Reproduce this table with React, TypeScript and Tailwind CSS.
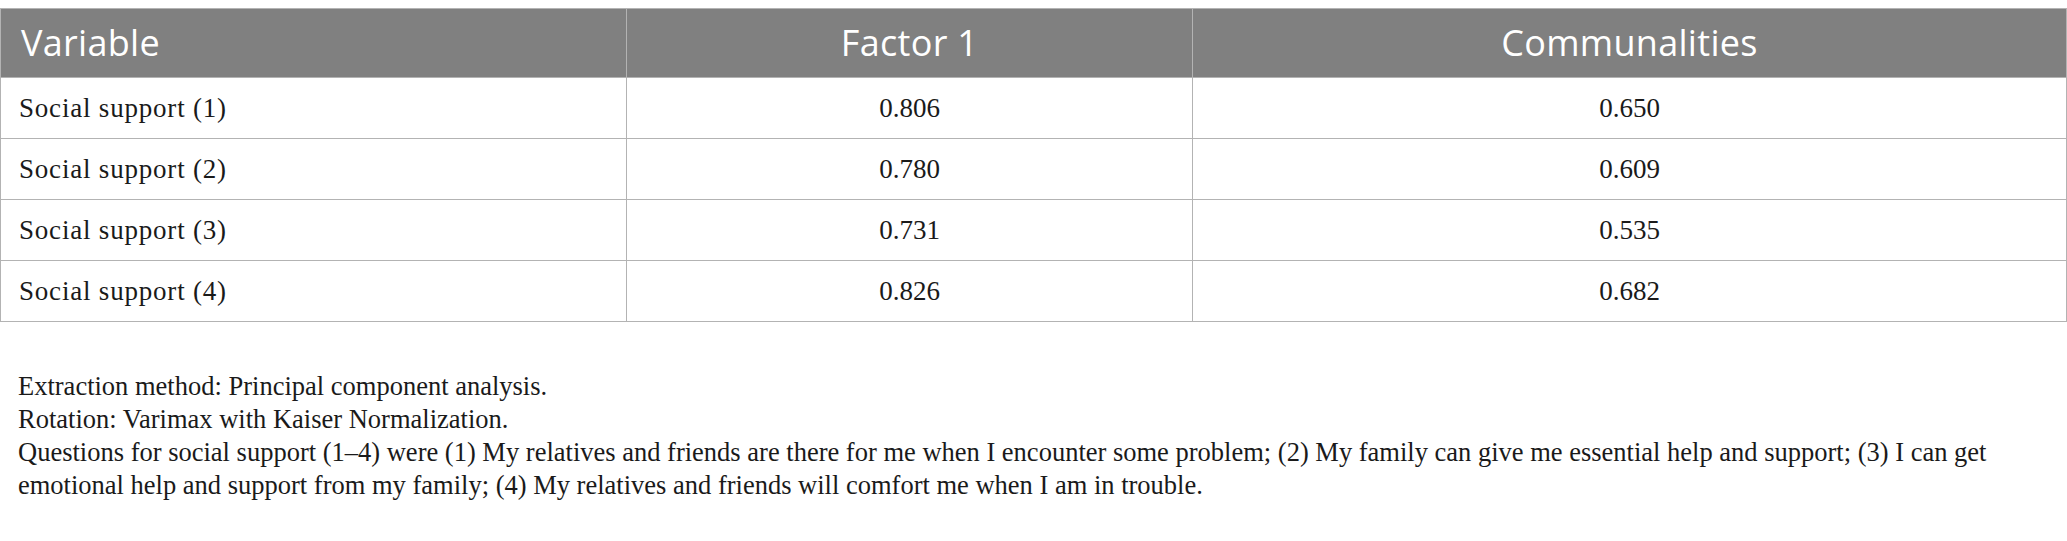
const rows = [
  { name: 'Social support (1)', factor: '0.806', comm: '0.650' },
  { name: 'Social support (2)', factor: '0.780', comm: '0.609' },
  { name: 'Social support (3)', factor: '0.731', comm: '0.535' },
  { name: 'Social support (4)', factor: '0.826', comm: '0.682' },
];

const serif = "font-['Liberation_Serif','Times_New_Roman',serif]";
const sans = "font-['Open_Sans','Noto_Sans',sans-serif]";

export default function App() {
  return (
    <div className="w-[2067px] bg-white pt-[8px]">
      <table className="w-full table-fixed border-collapse">
        <colgroup>
          <col className="w-[626px]" />
          <col className="w-[566px]" />
          <col />
        </colgroup>
        <thead>
          <tr className="h-[69px] bg-[#808080]">
            <th className={`${sans} border border-[#b3b3b3] px-[20px] text-left text-[36px] font-normal tracking-[0.3px] text-white`}>
              Variable
            </th>
            <th className={`${sans} border border-[#b3b3b3] text-center text-[36px] font-normal tracking-[0.3px] text-white`}>
              Factor 1
            </th>
            <th className={`${sans} border border-[#b3b3b3] text-center text-[36px] font-normal tracking-[0.3px] text-white`}>
              Communalities
            </th>
          </tr>
        </thead>
        <tbody>
          {rows.map((r) => (
            <tr key={r.name} className="h-[61px]">
              <td className={`${serif} border border-[#b3b3b3] px-[18px] text-[27px] tracking-[0.8px] text-[#1a1a1a]`}>
                {r.name}
              </td>
              <td className={`${serif} border border-[#b3b3b3] text-center text-[27px] text-[#1a1a1a]`}>{r.factor}</td>
              <td className={`${serif} border border-[#b3b3b3] text-center text-[27px] text-[#1a1a1a]`}>{r.comm}</td>
            </tr>
          ))}
        </tbody>
      </table>

      <div className={`${serif} mt-[48px] pl-[18px] pr-[40px] text-[26.5px] leading-[33px] text-[#1a1a1a]`}>
        <p>Extraction method: Principal component analysis.</p>
        <p>Rotation: Varimax with Kaiser Normalization.</p>
        <p>
          Questions for social support (1–4) were (1) My relatives and friends are there for me when I encounter some
          problem; (2) My family can give me essential help and support; (3) I can get emotional help and support from my
          family; (4) My relatives and friends will comfort me when I am in trouble.
        </p>
      </div>
    </div>
  );
}
